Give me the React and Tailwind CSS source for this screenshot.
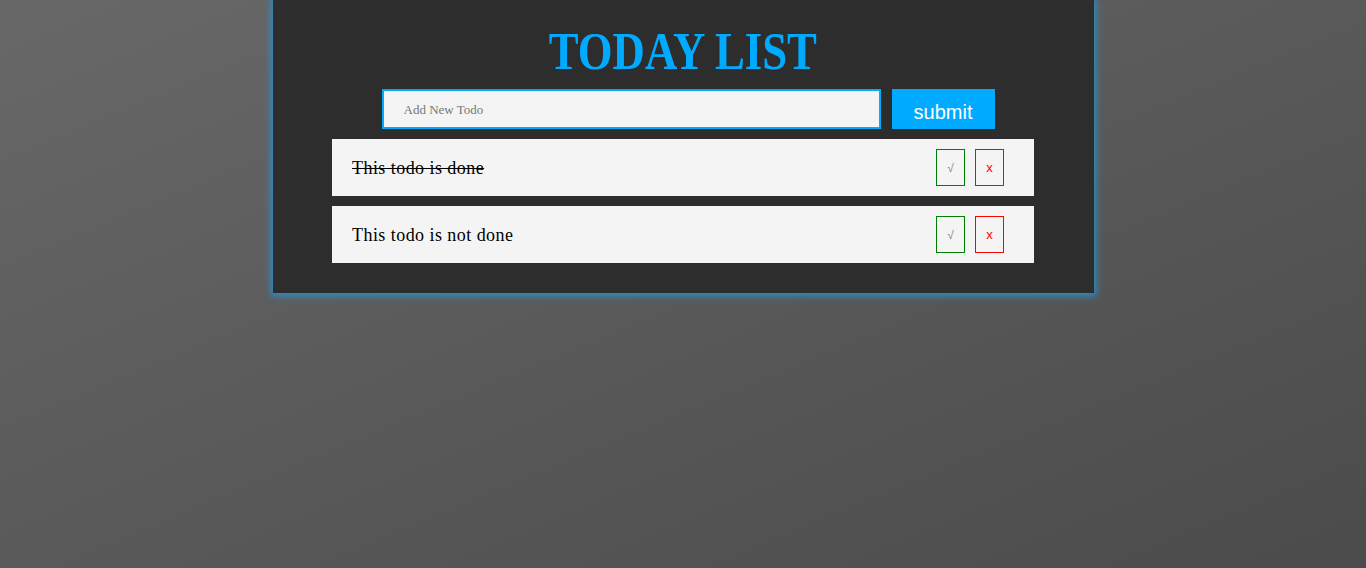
const todos = [
  { id: 1, text: 'This todo is done', done: true },
  { id: 2, text: 'This todo is not done', done: false },
];

const App = () => {
  return (
    <div className="min-h-screen bg-gradient-to-br from-[#686868] to-[#4b4b4b] flex justify-center">
      <div className="w-[821px] h-[293px] bg-[#2d2d2d] shadow-[0_1px_7px_2px_#2a8fcc] flex flex-col items-center">
        <h1
          className="mt-[22px] h-[60px] text-[52px] leading-[60px] font-bold text-[#00aaff] scale-x-[0.86]"
          style={{ fontFamily: '"Liberation Serif", serif' }}
        >
          TODAY LIST
        </h1>

        <div className="mt-[7px] ml-[10px] flex gap-[11px]">
          <input
            type="text"
            placeholder="Add New Todo"
            className="w-[499px] h-[40px] border-2 border-[#00aaff] bg-[#f4f4f4] pl-[20px] pt-[2px] text-[13px] text-gray-700 placeholder:text-[#777] outline-none"
            style={{ fontFamily: '"Liberation Serif", serif' }}
          />
          <button
            className="w-[103px] h-[40px] bg-[#00aaff] text-white text-[20px] pt-[6px]"
            style={{ fontFamily: '"Liberation Sans", Arial, sans-serif' }}
          >
            submit
          </button>
        </div>

        <div className="mt-[10px] flex flex-col gap-[10px]">
          {todos.map(todo => (
            <div
              key={todo.id}
              className="w-[702px] h-[57px] bg-[#f4f4f4] flex items-center pl-[20px] pr-[30px]"
            >
              <span
                className={`flex-1 pt-[2px] text-[18px] tracking-[0.45px] text-black ${todo.done ? 'line-through' : ''}`}
                style={{ fontFamily: '"Liberation Serif", serif' }}
              >
                {todo.text}
              </span>
              <button className="w-[29px] h-[37px] border border-[#008000] text-[12px] text-[#7a8a8a] flex items-center justify-center">
                √
              </button>
              <button
                className="ml-[10px] w-[29px] h-[37px] border border-[#ff0000] text-[13px] text-[#ff0000] flex items-center justify-center"
                style={{ fontFamily: '"Liberation Sans", Arial, sans-serif' }}
              >
                x
              </button>
            </div>
          ))}
        </div>
      </div>
    </div>
  );
};

export default App;
